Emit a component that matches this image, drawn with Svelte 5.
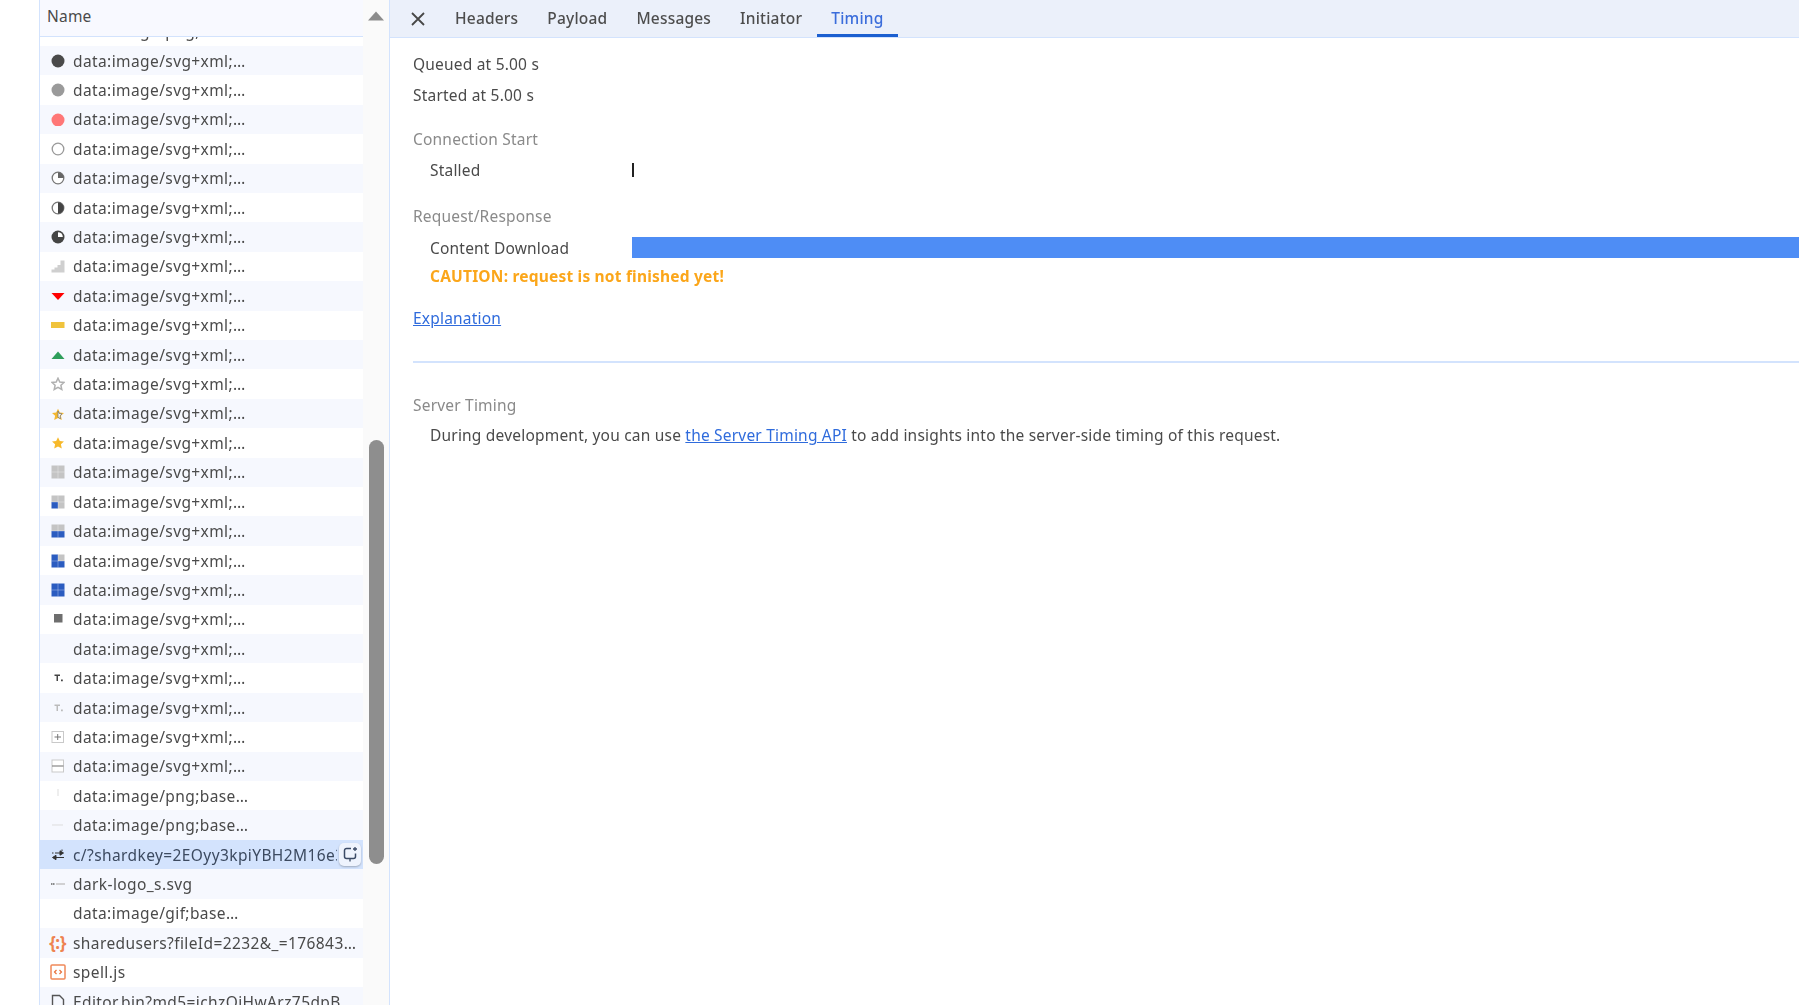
<script lang="ts">
  // Network panel, Timing tab open. Request list on the left, details on the right.
  const svg = "data:image/svg+xml;…";
  const png = "data:image/png;base…";
  const rows = [
    { icon: "none", name: "data:image/png;base…" },
    { icon: "dark", name: svg },
    { icon: "grey", name: svg },
    { icon: "red", name: svg },
    { icon: "ring", name: svg },
    { icon: "q1", name: svg },
    { icon: "q2", name: svg },
    { icon: "q3", name: svg },
    { icon: "bars", name: svg },
    { icon: "down", name: svg },
    { icon: "dash", name: svg },
    { icon: "up", name: svg },
    { icon: "star0", name: svg },
    { icon: "star1", name: svg },
    { icon: "star2", name: svg },
    { icon: "sq0", name: svg },
    { icon: "sq1", name: svg },
    { icon: "sq2", name: svg },
    { icon: "sq3", name: svg },
    { icon: "sq4", name: svg },
    { icon: "small", name: svg },
    { icon: "none", name: svg },
    { icon: "t1", name: svg },
    { icon: "t2", name: svg },
    { icon: "plus", name: svg },
    { icon: "minus", name: svg },
    { icon: "vtick", name: png },
    { icon: "htick", name: png },
    { icon: "ws", name: "c/?shardkey=2EOyy3kpiYBH2M16e3kpiYBH2M16e3", selected: true },
    { icon: "logo", name: "dark-logo_s.svg" },
    { icon: "none", name: "data:image/gif;base…" },
    { icon: "json", name: "sharedusers?fileId=2232&_=176843…" },
    { icon: "js", name: "spell.js" },
    { icon: "doc", name: "Editor.bin?md5=ichzQiHwArz75dpB" },
  ];
  const tabs = ["Headers", "Payload", "Messages", "Initiator", "Timing"];
  const grey = "#c4c4c4";
  const blue = "#2b5cc0";
  const squares: Record<string, [string, string, string, string]> = {
    sq0: [grey, grey, grey, grey],
    sq1: [grey, grey, blue, grey],
    sq2: [grey, grey, blue, blue],
    sq3: [blue, grey, blue, blue],
    sq4: [blue, blue, blue, blue],
  };
  const star = "M7 1.2 8.800 5l4.200.5-3.100 2.800.9 4.200L7 10.400l-3.800 2.100.9-4.200L1 5.500 5.200 5z";
</script>

{#snippet icon(kind: string)}
  <svg class="ic" viewBox="0 0 14 14" width="14" height="14" aria-hidden="true">
    {#if kind === "dark"}
      <circle cx="7" cy="7" r="6.500" fill="#4a4a4a" />
    {:else if kind === "grey"}
      <circle cx="7" cy="7" r="6.500" fill="#9a9a9a" />
    {:else if kind === "red"}
      <circle cx="7" cy="8" r="6.500" fill="#f77" />
    {:else if kind === "ring"}
      <circle cx="7" cy="7" r="5.800" fill="#fff" stroke="#999" stroke-width="1.300" />
    {:else if kind === "q1"}
      <circle cx="7" cy="7" r="5.800" fill="#fff" stroke="#777" stroke-width="1.300" />
      <path d="M7 7V1.200A5.800 5.800 0 0 1 12.800 7z" fill="#666" />
    {:else if kind === "q2"}
      <circle cx="7" cy="7" r="5.800" fill="#fff" stroke="#777" stroke-width="1.300" />
      <path d="M7 1.200a5.800 5.800 0 0 1 0 11.600z" fill="#444" />
    {:else if kind === "q3"}
      <circle cx="7" cy="7" r="6.500" fill="#444" />
      <path d="M7 7V2.200A4.800 4.800 0 0 1 11.800 7z" fill="#fff" />
    {:else if kind === "bars"}
      <path d="M.5 13.500v-3h3v3zM3.500 13.500V8.500h3v5zM6.500 13.500V6h3v7.500zM9.500 13.500V1.500h4v12z" fill="#cfcfcf" />
    {:else if kind === "down"}
      <path d="M.500 4h13L7 11z" fill="#f00" />
    {:else if kind === "dash"}
      <rect x="0" y="4" width="13.500" height="6" fill="#f0c33c" />
    {:else if kind === "up"}
      <path d="M.500 11h13L7 3.500z" fill="#2e9e5b" />
    {:else if kind === "star0"}
      <path d={star} fill="#fff" stroke="#b0b0b0" stroke-width="1.500" />
    {:else if kind === "star1"}
      <g transform="translate(0 1.500)">
        <path d={star} fill="#f5b82e" />
        <path d="M7 3.500 8.200 6l2.800.4-2 1.900.5 2.800L7 9.800z" fill="#fff" stroke="#777" stroke-width=".8" />
      </g>
    {:else if kind === "star2"}
      <path d={star} fill="#f7b92b" />
    {:else if kind === "sq0" || kind === "sq1" || kind === "sq2" || kind === "sq3" || kind === "sq4"}
      <rect x=".5" y=".5" width="6.500" height="6.500" fill={squares[kind][0]} />
      <rect x="7" y=".5" width="6.500" height="6.500" fill={squares[kind][1]} />
      <rect x=".5" y="7" width="6.500" height="6.500" fill={squares[kind][2]} />
      <rect x="7" y="7" width="6.500" height="6.500" fill={squares[kind][3]} />
      <path d="M7 .5v13M.5 7h13" stroke="#fff" stroke-opacity=".45" stroke-width=".7" />
    {:else if kind === "small"}
      <rect x="3" y="2" width="8.500" height="8.500" fill="#6e6e6e" />
    {:else if kind === "t1"}
      <path d="M3.500 3.500h5.500v1.500H7V10H5.500V5h-2zM10 8.500h1.800v1.800H10z" fill="#444" />
    {:else if kind === "t2"}
      <path d="M3.500 3.500h5.500v1.500H7V10H5.500V5h-2zM10 8.500h1.800v1.800H10z" fill="#bbb" />
    {:else if kind === "plus"}
      <rect x="1" y="1.500" width="11.500" height="11" fill="#fff" stroke="#c9c9c9" />
      <path d="M3.500 7h6.500M6.700 4v6" stroke="#777" />
    {:else if kind === "minus"}
      <rect x="1" y="1" width="11.500" height="12" fill="#fff" stroke="#c9c9c9" />
      <path d="M1 7h11.500" stroke="#888" stroke-width="1.200" />
    {:else if kind === "vtick"}
      <path d="M7 0v7" stroke="#ddd" />
    {:else if kind === "htick"}
      <path d="M1 7h11" stroke="#ddd" />
    {:else if kind === "ws"}
      <path d="M1 5h1.500M4 5h5M9 2.800 12.500 5 9 7.200zM13 9.500H5M5 7.300 1.500 9.500 5 11.700z" fill="#333" stroke="#333" />
      <path d="M11 1.500v1.500" stroke="#333" />
    {:else if kind === "logo"}
      <path d="M0 7h4" stroke="#666" stroke-width="1.500" stroke-dasharray="1.500 .5" />
      <path d="M5 7h9" stroke="#c4c4c4" stroke-width="1.500" />
    {/if}
  </svg>
{/snippet}

<div class="page">
  <div class="gutter"></div>

  <section class="left">
    <div class="list">
      <div class="name-head">Name</div>
      <div class="rows">
        <div class="rows-inner">
          {#each rows as r, i}
            <div class="row" class:odd={i % 2 === 1} class:selected={r.selected}>
              <span class="icon-box">
                {#if r.icon === "json"}
                  <span class="json">{"{:}"}</span>
                {:else if r.icon === "js"}
                  <svg viewBox="0 0 16 16" width="16" height="16" aria-hidden="true">
                    <rect x="1" y="1" width="14" height="14" rx="1" fill="none" stroke="#f0895a" stroke-width="1.500" />
                    <path d="M6.500 6 4.500 8l2 2M9.500 6l2 2-2 2" fill="none" stroke="#e8703a" stroke-width="1.200" />
                  </svg>
                {:else if r.icon === "doc"}
                  <svg viewBox="0 0 16 16" width="16" height="16" aria-hidden="true">
                    <path d="M2.500 15V1.500h7l4 4V15" fill="none" stroke="#555" stroke-width="1.400" />
                  </svg>
                {:else if r.icon !== "none"}
                  {@render icon(r.icon)}
                {/if}
              </span>
              <span class="label">{r.name}</span>
              {#if r.selected}
                <span class="hover-btn">
                  <svg viewBox="0 0 16 16" width="16" height="16" aria-hidden="true">
                    <path d="M9 2.500H4.500a2 2 0 0 0-2 2v6a2 2 0 0 0 2 2h7a2 2 0 0 0 2-2V7.500" fill="none" stroke="#3a4a66" stroke-width="1.500" />
                    <path d="M13 1v4M11 3h4M8 12.500v3" stroke="#3a4a66" stroke-width="1.300" />
                  </svg>
                </span>
              {/if}
            </div>
          {/each}
        </div>
      </div>
    </div>
    <div class="scrollbar">
      <svg class="arrow" viewBox="0 0 16 10" width="16" height="10" aria-hidden="true"><path d="M0 9.500 8 .5l8 9z" fill="#8c8c8c" /></svg>
      <div class="thumb"></div>
    </div>
  </section>

  <section class="right">
    <nav class="tabs">
      <button class="close" aria-label="Close">
        <svg viewBox="0 0 14 14" width="14" height="14" aria-hidden="true"><path d="M1 1l12 12M13 1 1 13" stroke="#474747" stroke-width="1.800" fill="none" /></svg>
      </button>
      {#each tabs as t}
        <span class="tab" class:active={t === "Timing"}>{t}</span>
      {/each}
    </nav>

    <div class="body">
      <p class="meta first">Queued at 5.00 s</p>
      <p class="meta started">Started at 5.00 s</p>

      <h4 class="conn">Connection Start</h4>
      <div class="timing-row">
        <span class="phase">Stalled</span>
        <span class="tick"></span>
      </div>

      <h4 class="req">Request/Response</h4>
      <div class="timing-row download">
        <span class="phase">Content Download</span>
        <span class="bar"></span>
      </div>
      <p class="caution">CAUTION: request is not finished yet!</p>

      <a class="explain" href="#explanation">Explanation</a>
      <hr />

      <h4 class="server">Server Timing</h4>
      <p class="note">During development, you can use <a href="#api">the Server Timing API</a> to add insights into the server-side timing of this request.</p>
    </div>
  </section>
</div>

<style>
  :global(body) {
    margin: 0;
    background: #fff;
  }
  .page {
    display: flex;
    height: 1005px;
    overflow: hidden;
    font-family: "Noto Sans", "Open Sans", sans-serif;
    font-size: 15.500px;
    letter-spacing: 0.2px;
    color: #4a4a4a;
    filter: blur(0.5px);
  }
  .gutter {
    width: 39px;
    flex: none;
  }
  .left {
    width: 349px;
    flex: none;
    display: flex;
    border-left: 1px solid #d3e3fd;
    border-right: 1px solid #d3e3fd;
  }
  .list {
    width: 323px;
    flex: none;
    display: flex;
    flex-direction: column;
    min-height: 0;
  }
  .name-head {
    height: 37px;
    flex: none;
    box-sizing: border-box;
    padding: 5px 0 0 7px;
    background: #f8f9ff;
    border-bottom: 1px solid #d3e3fd;
  }
  .rows {
    flex: 1;
    min-height: 0;
    overflow: hidden;
  }
  .rows-inner {
    margin-top: -20.500px;
  }
  .row {
    height: 29.420px;
    display: flex;
    align-items: center;
    position: relative;
    background: #fff;
    letter-spacing: 0.4px;
  }
  .row.odd {
    background: #f6f8fe;
  }
  .row.selected {
    background: #d3e3fd;
  }
  .icon-box {
    width: 33px;
    flex: none;
    display: flex;
    justify-content: center;
    padding-left: 2px;
    box-sizing: border-box;
  }
  .ic {
    display: block;
  }
  .json {
    color: #ee8350;
    font-weight: 700;
    font-size: 17px;
    letter-spacing: -0.5px;
  }
  .label {
    white-space: nowrap;
    overflow: hidden;
    flex: 1;
    min-width: 0;
    margin-right: 3px;
  }
  .selected .label {
    margin-right: 26px;
    color: #3c4a60;
  }
  .hover-btn {
    position: absolute;
    right: 2px;
    top: 3px;
    width: 22px;
    height: 23px;
    display: flex;
    align-items: center;
    justify-content: center;
    background: #eef3fd;
    border-radius: 5px;
    box-shadow: 0 1px 2px rgba(0, 0, 0, 0.25);
  }
  .scrollbar {
    flex: 1;
    background: #fafafa;
    display: flex;
    flex-direction: column;
    align-items: center;
  }
  .arrow {
    margin-top: 11px;
    flex: none;
  }
  .thumb {
    width: 15px;
    height: 424px;
    margin-top: 419px;
    border-radius: 8px;
    background: #8e8e8e;
    flex: none;
  }
  .right {
    flex: 1;
    min-width: 0;
  }
  .tabs {
    height: 37px;
    display: flex;
    background: #ebf0fa;
    border-bottom: 1px solid #d3e3fd;
    padding-left: 21px;
  }
  .close {
    width: 14px;
    height: 37px;
    padding: 0;
    margin-right: 15.500px;
    border: none;
    background: none;
    display: flex;
    align-items: center;
  }
  .tab {
    padding: 7px 14.500px 0;
    box-sizing: border-box;
    height: 37px;
    font-weight: 500;
    color: #4d4d4d;
  }
  .tab.active {
    color: #3b6ddb;
    border-bottom: 3px solid #1b5fd0;
  }
  .body {
    padding: 0 0 0 23px;
  }
  p,
  h4 {
    margin: 0;
    font-size: inherit;
    font-weight: 400;
    line-height: 20px;
  }
  .meta.first {
    margin-top: 16px;
  }
  .meta.started {
    margin-top: 11px;
  }
  h4 {
    color: #8a8a8a;
  }
  .conn {
    margin-top: 24px;
  }
  .req {
    margin-top: 25px;
  }
  .timing-row {
    display: flex;
    align-items: center;
    height: 22px;
    margin-top: 10px;
  }
  .download {
    margin-top: 11px;
  }
  .phase {
    width: 202px;
    margin-left: 17px;
    flex: none;
  }
  .tick {
    width: 2px;
    height: 14px;
    background: #222;
  }
  .bar {
    flex: 1;
    height: 21px;
    margin-top: -2px;
    background: #4e8df5;
  }
  .caution {
    margin: 7px 0 0 17px;
    color: #fba61a;
    font-weight: 700;
  }
  .explain {
    display: block;
    width: max-content;
    margin-top: 22px;
    line-height: 20px;
  }
  a {
    color: #2f6bdc;
    text-decoration: underline;
  }
  hr {
    border: none;
    border-top: 2px solid #d3e3fd;
    margin: 33px 0 0;
  }
  .server {
    margin-top: 32px;
  }
  .note {
    margin: 10px 0 0 17px;
  }
</style>
